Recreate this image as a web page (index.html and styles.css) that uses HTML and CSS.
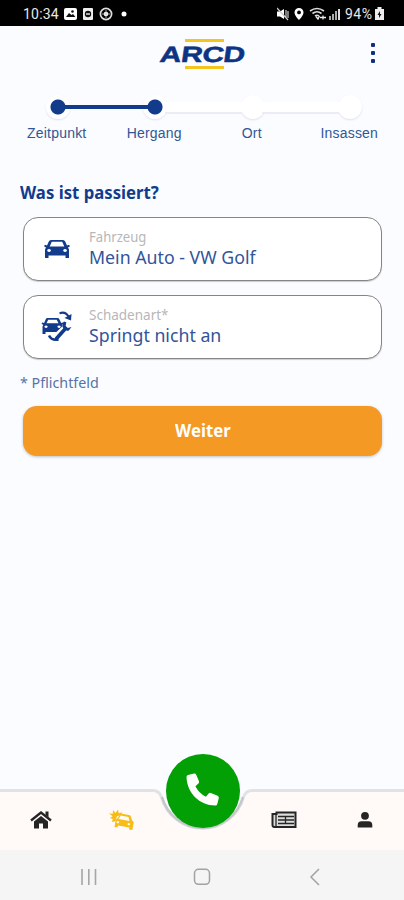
FILE: index.html
```html
<!DOCTYPE html>
<html lang="de">
<head>
<meta charset="utf-8">
<meta name="viewport" content="width=device-width">
<title>ARCD</title>
<link rel="stylesheet" href="styles.css">
</head>
<body>
<div class="status">
  <span class="clock">10:34</span>
  <svg class="status-left" width="66" height="14" viewBox="0 0 66 14">
    <rect x="0" y="1" width="13" height="12" rx="2" fill="#fff"/>
    <path d="M2 10l3-4 2.500 2L9 7l2.500 3z" fill="#111"/><circle cx="8.500" cy="4.500" r="1.300" fill="#111"/>
    <rect x="19" y="1" width="10" height="12" rx="1" fill="#eee"/>
    <circle cx="24" cy="7" r="3.200" fill="#111"/><path d="M22 7h4" stroke="#fff" stroke-width="1.300"/>
    <circle cx="42" cy="7" r="5.600" fill="none" stroke="#ddd" stroke-width="1.700"/>
    <circle cx="42" cy="7" r="2.300" fill="#fff"/><path d="M42 3v8M38 7h8" stroke="#ccc" stroke-width=".8"/>
    <circle cx="60" cy="7" r="2.500" fill="#fff"/>
  </svg>
  <svg class="status-right" width="66" height="14" viewBox="0 0 66 14">
    <path d="M0 4.500h3L7 2v10L3 9.500H0z" fill="#fff"/><path d="M0 1l11 12M9 3v8M11 4v7" stroke="#ccc" stroke-width="1.200"/>
    <path d="M22 1a4.500 4.500 0 0 1 4.500 4.500C26.500 8.500 22 13 22 13s-4.500-4.500-4.500-7.500A4.500 4.500 0 0 1 22 1z" fill="#fff"/><circle cx="22" cy="5.400" r="1.900" fill="#000"/>
    <path d="M33 4q7-5 14 0M35.500 6.500q4.500-3.500 9 0M38 9q2-1.500 4 0" fill="none" stroke="#ddd" stroke-width="1.600"/><path d="M39 9.500l2 2.500 1.500-3M43 10.500h6M46 8.500v4" fill="none" stroke="#eee" stroke-width="1.300"/>
    <path d="M52 9h2v4h-2zM55 7h2v6h-2zM58 4h2v9h-2z" fill="#aaa"/><path d="M61 2h2v11h-2z" fill="#ddd"/>
  </svg>
  <span class="percent">94%</span>
  <svg class="battery" width="9" height="13" viewBox="0 0 9 13"><path d="M2.500 0h4v2H9v11H0V2h2.500z" fill="#eee"/><path d="M5 4L2.500 8H4v3l2.500-4H5z" fill="#111"/></svg>
</div>

<header class="header">
  <div class="logo"><span>ARCD</span></div>
  <div class="more"><i></i><i></i><i></i></div>
</header>

<main class="main">
  <div class="stepper">
    <div class="step done active-line"><i></i><span>Zeitpunkt</span></div>
    <div class="step done"><i></i><span>Hergang</span></div>
    <div class="step"><i></i><span>Ort</span></div>
    <div class="step last"><i></i><span>Insassen</span></div>
  </div>

  <h1><span>Was ist passiert?</span></h1>

  <div class="field">
    <svg class="field-icon" width="36" height="36" viewBox="0 0 36 36">
      <path fill="#123b8c" fill-rule="evenodd" d="M12 9h12q1.500 0 2.200 1.500l1.800 4 2-.7 1 1.500-2 1.200 1 2V27h-3.500v-2.500h-17V27H6v-8.500l1-2-2-1.200 1-1.500 2 .7 1.800-4Q10.500 9 12 9zm.8 1.800L10.700 15.500h14.600l-2.100-4.700zM10 18a1.800 1.500 0 1 0 .1 0zm16 0a1.800 1.500 0 1 0 .1 0z"/>
    </svg>
    <div class="field-text"><label>Fahrzeug</label><b class="vehicle">Mein Auto - VW Golf</b></div>
  </div>

  <div class="field">
    <svg class="field-icon" width="36" height="36" viewBox="0 0 36 36">
      <path fill="#123b8c" fill-rule="evenodd" d="M8.500 9h10q1.300 0 2 1.400l1.700 3.600 1.800-.4.500 1.400-1.700.8.700 1.700V25h-3v-2H6.500v2h-3v-7.500l.8-1.700-1.700-.8.500-1.400 2 .4 1.500-3.600Q7.300 9 8.500 9zm.7 1.700L7.500 14.300h12l-1.700-3.600zM7 16.500a1.600 1.200 0 1 0 .1 0zm13 0a1.600 1.200 0 1 0 .1 0z"/>
      <path d="M15.500 29l10-9.500" stroke="#fff" stroke-width="6"/>
      <path d="M17.500 29.500l9-10" stroke="#123b8c" stroke-width="3.600" stroke-linecap="round"/>
      <path d="M25 12.500q-2.500 2.500-1.200 6 2.200 4 6 3l2.700-3.500-3.700 1-2.200-2 .7-3.700z" fill="#123b8c"/>
      <path d="M10 26.500q2.500 5.300 9.500 4" fill="none" stroke="#123b8c" stroke-width="2.600"/>
      <path d="M20.500 4.300q6-2.500 9.500 4" fill="none" stroke="#123b8c" stroke-width="2"/><path d="M25.500 9l6.500 2.500.5-6.500z" fill="#123b8c"/>
    </svg>
    <div class="field-text"><label class="damage-label">Schadenart*</label><b class="damage">Springt nicht an</b></div>
  </div>

  <p class="required"><span>* Pflichtfeld</span></p>
  <button class="next"><span>Weiter</span></button>
</main>

<nav class="tabs">
  <svg class="tabs-shape" width="404" height="66" viewBox="0 0 404 66">
    <path d="M0 7H153Q159 7 161.500 13A42.500 42.500 0 0 0 243.500 13Q246 7 252 7H404V66H0z" fill="#fff9f8"/>
    <path d="M0 6.500H153Q159 6.500 161.500 13A42.500 42.500 0 0 0 243.500 13Q246 6.500 252 6.500H404" fill="none" stroke="#e1e2e5" stroke-width="3"/>
    <path d="M162 13A42 42 0 0 0 243 13" fill="none" stroke="#c5c7cb" stroke-width="2.500"/>
  </svg>
  <a class="tab"><svg width="22" height="20" viewBox="0 0 22 20"><path d="M1 10.500L11 2.500l10 8" fill="none" stroke="#252525" stroke-width="2.300"/><path d="M15.500 1.500h3v6l-3-2.400zM4 11.500l7-5.500 7 5.500V18.500h-5v-5H9v5H4z" fill="#252525"/></svg></a>
  <a class="tab"><svg width="26" height="22" viewBox="0 0 26 22"><path d="M4 1l2.500 3L9 .5l.7 3.700 3.800-1-2 3-3.500 1-1.500 5L3 13l.8-3L1 9l2.600-1.700L0 4.500l3.800.3z" fill="#f7bd16"/><path fill="#f7bd16" fill-rule="evenodd" d="M11.500 4.500l8.500 1.500q1.500.3 2 1.800l1 3.500 1.800 2L23.300 21l-3.300-.5.4-2-11.500-2-.4 2-3-.5 1.200-7 2-2 2-3Q10.500 4.200 11.500 4.500zm.3 2L9.500 10l11 2-1-4zM8.800 12a1.300 1.100 0 1 0 .1 0zm11 2a1.300 1.100 0 1 0 .1 0z"/></svg></a>
  <a class="call"><svg width="38" height="38" viewBox="0 0 38 38"><path fill="#fff" d="M4 3l6-1.500q1.500-.3 2.200 1.200l2.800 6.500q.5 1.300-.6 2.300l-3 2.800q3.500 7 10.500 10.500l2.700-3.300q1-1 2.300-.5l6.700 2.800q1.500.7 1.200 2.200L33.300 32q-.4 1.500-2 1.500C15.500 33.500 3 21 2.500 5Q2.500 3.400 4 3z"/></svg></a>
  <a class="tab"><svg width="26" height="18" viewBox="0 0 26 18"><path d="M5.500 1.500h19v14.500H3.500q-2 0-2-2V3h4z" fill="#ddd" stroke="#252525" stroke-width="2"/><path d="M5 3v13M7 5.500h16M7 9h16M7 12.500h16M14.500 5v8" fill="none" stroke="#252525" stroke-width="1.300"/></svg></a>
  <a class="tab"><svg width="16" height="18" viewBox="0 0 16 18"><circle cx="8" cy="4.800" r="3.900" fill="#252525"/><path d="M.7 16.500V14q0-3.800 3.800-3.800h7q3.800 0 3.800 3.800v2.500z" fill="#252525"/></svg></a>
</nav>

<div class="system">
  <svg width="18" height="18" viewBox="0 0 18 18"><path d="M2 1v16M8.800 1v16M15.500 1v16" stroke="#a6a6a6" stroke-width="1.600"/></svg>
  <svg width="18" height="18" viewBox="0 0 18 18"><rect x="1.500" y="1.300" width="15" height="15" rx="4" fill="none" stroke="#a2a2a2" stroke-width="1.500"/></svg>
  <svg width="18" height="18" viewBox="0 0 18 18"><path d="M13 1L5 9l8 8" fill="none" stroke="#a2a2a2" stroke-width="1.500"/></svg>
</div>
</body>
</html>
```
FILE: styles.css
```css
* { box-sizing: border-box; }
body {
  margin: 0;
  width: 404px;
  height: 900px;
  overflow: hidden;
  display: flex;
  flex-direction: column;
  background: #fafcff;
  color: #123b8c;
  font-family: "Noto Sans", sans-serif;
}
svg { display: block; flex: none; }

.status {
  height: 26px;
  flex: none;
  background: #000;
  color: #e8e8e8;
  display: flex;
  align-items: center;
  padding: 1px 0 0 23px;
  font: 14px/26px Roboto, sans-serif;
}
.clock { width: 41px; letter-spacing: .2px; }
.status-right { margin-left: 147px; }
.percent { margin-left: 2px; width: 29px; letter-spacing: .5px; }
.battery { margin-left: 1px; }

.header {
  height: 54px;
  flex: none;
  display: flex;
  justify-content: flex-end;
  padding: 13px 28px 0 0;
}
.logo {
  width: 88px;
  height: 31px;
  margin-right: 123px;
  background:
    linear-gradient(#f6c51d, #f6c51d) 25px 0 / 39px 3px no-repeat,
    linear-gradient(#f6c51d, #f6c51d) 25px 27px / 39px 3px no-repeat;
}
.logo span {
  display: block;
  width: max-content;
  margin-top: 1px;
  transform: scaleX(1.36) skewX(-6deg);
  transform-origin: 0 50%;
  font: bold 22px/30px "Liberation Sans", sans-serif;
  letter-spacing: -.3px;
  -webkit-text-stroke: .5px #0d3484;
  color: #0d3484;
}
.more { display: flex; flex-direction: column; gap: 4px; padding-top: 4px; margin-right: 1px; }
.more i { width: 4px; height: 4px; background: #123080; border-radius: 1px; }

.main { flex: 1; padding: 0 22px 0 23px; }

.stepper { display: grid; grid-template-columns: repeat(4, 97.5px); margin: 15px 0 0 -14px; height: 65px; }
.step { position: relative; display: flex; flex-direction: column; align-items: center; }
.step i {
  width: 24px;
  height: 24px;
  border-radius: 50%;
  background: #fff;
  box-shadow: 0 1px 2px #dfe0ee;
  position: relative;
  z-index: 1;
}
.step.done i { background: radial-gradient(circle, #123b8c 7px, #fff 8px); }
.step::before {
  content: "";
  position: absolute;
  left: 58px;
  top: 7px;
  width: 77px;
  height: 10px;
  background: #fff;
  border-bottom: 2px solid #ecebf6;
  z-index: 2;
}
.step.last::before { display: none; }
.step.active-line::before {
  left: 55px;
  width: 85px;
  top: 10px;
  height: 4px;
  background: #123b8c;
  border: 0;
}
.step span { margin: 6px 2px 0 0; font: 14px/16px "Liberation Sans", sans-serif; color: #315795; letter-spacing: .2px; }

h1 { margin: 20px 0 0 -3px; font-size: 18px; line-height: 24px; font-weight: 700; }
h1 span, .required span, .next span, .field label, .field b {
  display: block;
  width: max-content;
  transform: scaleX(.93);
  transform-origin: 0 50%;
}

.field {
  height: 64px;
  margin-top: 13px;
  background: #fff;
  border: 1.500px solid #858585;
  border-radius: 15px;
  box-shadow: 0 1px 1px #ccc;
  display: flex;
  align-items: center;
  padding-left: 15px;
}
.field + .field { margin-top: 14px; }
.field-text { padding: 0 0 2px 14px; }
.field label { font-size: 13.500px; line-height: 17px; color: #b7b7b7; transform: scaleX(.97); }
.field .damage-label { transform: scaleX(1); }
.field b { font-size: 18px; font-weight: 400; line-height: 22px; color: #31559a; transform: scaleX(.985); }

.required { margin: 14px 0 0 -3px; font-size: 14px; line-height: 20px; color: #5673a8; }
.required span { transform: scaleX(1.02); }
.next {
  width: 359px;
  height: 50px;
  margin-top: 13px;
  padding: 0 0 2px;
  border: 0;
  border-radius: 14px;
  background: #f59925;
  box-shadow: 0 1px 3px #bfc0c4;
  color: #fff;
  font: bold 18px/48px "Noto Sans", sans-serif;
}
.next span { margin: 0 auto; transform-origin: 50% 50%; }

.tabs {
  position: relative;
  height: 66px;
  flex: none;
  display: grid;
  grid-template-columns: repeat(5, 81px);
  justify-items: center;
}
.tabs-shape { position: absolute; left: 0; top: 0; overflow: visible; }
.tab { position: relative; height: 72px; display: flex; align-items: center; }
.call {
  position: relative;
  width: 74px;
  height: 74px;
  margin-top: -30px;
  border-radius: 50%;
  background: #029f05;
  display: flex;
  align-items: center;
  justify-content: center;
}
.system {
  height: 50px;
  flex: none;
  background: #f5f5f5;
  display: flex;
  justify-content: space-between;
  align-items: center;
  padding: 3px 80px 0 80px;
}
```
